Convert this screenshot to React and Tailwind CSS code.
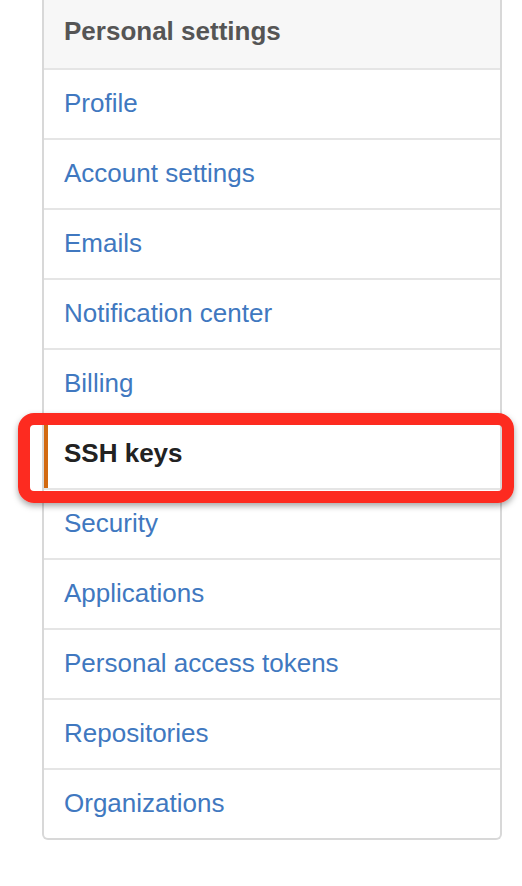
import React from 'react';

const items = [
  'Profile',
  'Account settings',
  'Emails',
  'Notification center',
  'Billing',
  'SSH keys',
  'Security',
  'Applications',
  'Personal access tokens',
  'Repositories',
  'Organizations',
];

const App = () => {
  return (
    <div className="relative w-full h-[886px] bg-white font-['Liberation_Sans',Arial,sans-serif]">
      <nav className="ml-[42px] w-[460px] border-x-2 border-b-2 border-[#d8d8d8] rounded-b-[6px] overflow-hidden">
        <div className="h-[68px] flex items-center pl-5 pb-[5px] bg-[#f7f7f7] text-[26px] font-bold text-[#555]">
          Personal settings
        </div>
        {items.map((item) =>
          item === 'SSH keys' ? (
            <div
              key={item}
              className="h-[70px] flex items-center border-t-2 border-[#e5e5e5] border-l-4 border-l-[#d26911] pl-4 pb-[2px] text-[26px] font-bold text-[#222]"
            >
              {item}
            </div>
          ) : (
            <a
              key={item}
              href="#"
              className="h-[70px] flex items-center border-t-2 border-[#e5e5e5] pl-5 pb-[2px] text-[26px] text-[#4078c0]"
            >
              {item}
            </a>
          )
        )}
      </nav>

      {/* annotation box */}
      <div className="absolute left-[18px] top-[413px] w-[496px] h-[90px] border-[12px] border-[#fd2b20] rounded-[16px] shadow-[0_3px_6px_rgba(0,0,0,0.35)]" />
    </div>
  );
};

export default App;
